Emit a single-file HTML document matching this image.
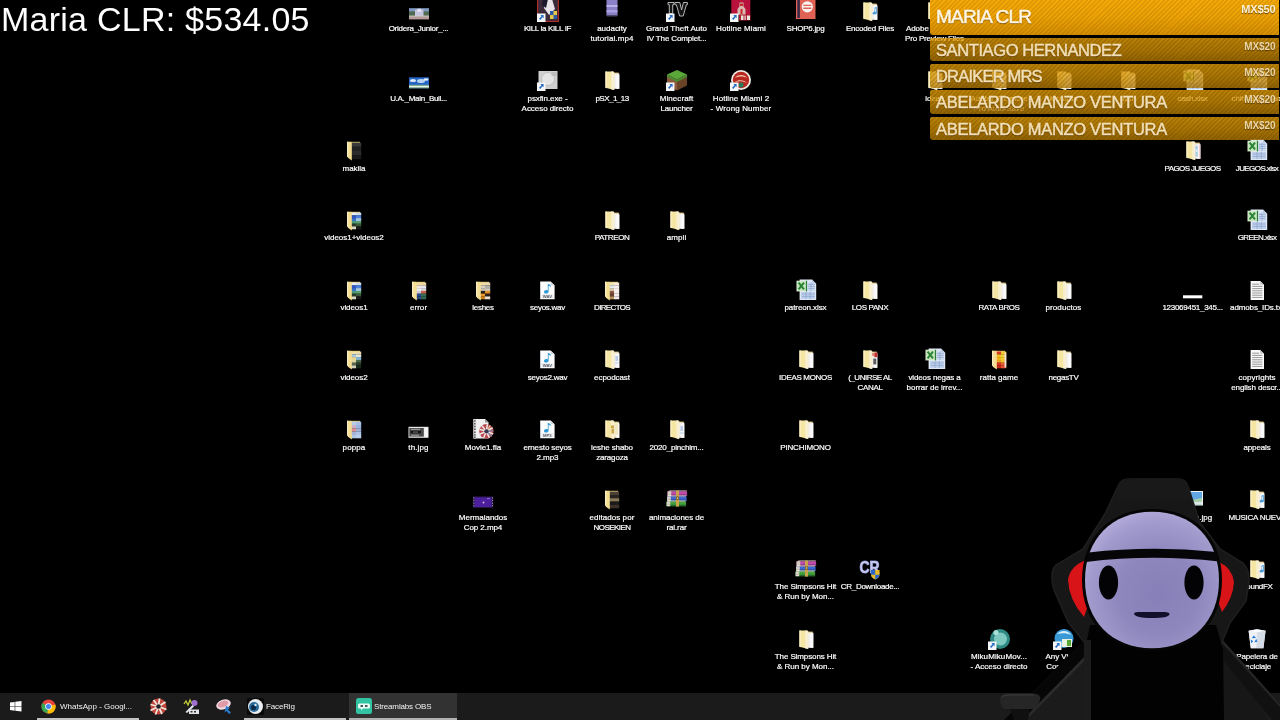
<!DOCTYPE html>
<html lang="es">
<head>
<meta charset="utf-8">
<title>Escritorio</title>
<style>
html,body{margin:0;padding:0;background:#000;}
body{width:1280px;height:720px;overflow:hidden;position:relative;font-family:"Liberation Sans",sans-serif;color:#fff;}
#total{will-change:transform;position:absolute;left:1px;top:-1px;font-size:34px;line-height:40px;white-space:nowrap;color:#fff;letter-spacing:.25px;}
#desk{position:absolute;left:0;top:0;width:1280px;height:720px;will-change:transform;}
.it{position:absolute;width:80px;height:48px;}
.it .ic{position:absolute;left:29px;top:0;width:22px;height:22px;overflow:visible;}
.it .lb{position:absolute;left:-10px;width:100px;top:23.600px;text-align:center;font-size:8px;line-height:10.100px;color:#fff;white-space:nowrap;-webkit-text-stroke:.2px #fff;}
.it .lb span{display:block;}
#bars{will-change:transform;position:absolute;left:930px;top:0;width:350px;height:142px;}
.bar{position:absolute;left:0;width:349px;border-radius:2px 0 0 3px;overflow:hidden;}
.bar .nm{position:absolute;left:6px;white-space:nowrap;text-shadow:0 1px 1px rgba(60,35,0,.7);}
.bar .am{position:absolute;right:3px;top:4px;font-size:10px;line-height:10px;font-weight:bold;letter-spacing:-.1px;text-shadow:0 1px 1px rgba(60,35,0,.7);}
.b1{top:-2px;height:37px;background:repeating-linear-gradient(135deg,rgba(120,60,0,.16) 0 1.400px,rgba(0,0,0,0) 1.400px 3.200px),linear-gradient(#f4aa08,#eba204 50%,#d28e02);}
.b1 .nm{top:7px;font-size:19px;line-height:24px;color:#fff6e2;letter-spacing:-.8px;-webkit-text-stroke:.5px #fff6e2;}
.b1 .am{color:#fff3d6;top:5.500px;font-size:11px;right:3.500px;}
.bx{height:23.600px;background:repeating-linear-gradient(135deg,rgba(90,45,0,.20) 0 1.400px,rgba(0,0,0,0) 1.400px 3.200px),linear-gradient(rgba(236,166,8,.78),rgba(212,148,5,.78) 55%,rgba(178,122,3,.8));}
.bx .nm{top:1px;font-size:16.500px;line-height:22px;color:#f3dfb6;letter-spacing:-.4px;-webkit-text-stroke:.5px #f3dfb6;}
.bx .am{color:#ecd6a6;top:4.300px;right:3.500px;}
#tb{position:absolute;left:0;top:693px;width:1280px;height:27px;background:#1b1b1b;will-change:transform;}
#tb .t{position:absolute;top:8.800px;font-size:8px;line-height:10px;color:#f2f2f2;white-space:nowrap;letter-spacing:-.15px;}
#tb .ul{position:absolute;top:25.400px;height:1.600px;background:#c2c2c2;}
#char{position:absolute;left:980px;top:460px;width:300px;height:260px;}
</style>
</head>
<body>

<div id="desk">
<div class="it" style="left:378.5px;top:0.5px"><svg class="ic" viewBox="0 0 22 22"><rect x="1" y="7.300" width="20" height="11" fill="#4f6a52"/><rect x="1" y="7.300" width="20" height="3" fill="#8098c4"/><rect x="7" y="8.500" width="8.500" height="6.500" fill="#c4c4de"/><rect x="9.500" y="7.800" width="3.500" height="3" fill="#e4e4f4"/><rect x="1" y="15.300" width="20" height="3" fill="#b89a9a"/><rect x="1" y="14.600" width="20" height="1" fill="#d8d0d0"/></svg><div class="lb"><span style="letter-spacing:-0.24px">Oridera_Junior_...</span></div></div>
<div class="it" style="left:507.5px;top:0.5px"><svg class="ic" viewBox="0 0 22 22"><rect x="0" y="-2" width="22" height="23" fill="#a83028"/><rect x="1.2" y="-2" width="19.6" height="21.800" fill="#3a2a3a"/><path d="M8 -2h7l3 10l-6 6l-5-7z" fill="#e8e4e8"/><path d="M6 -2h5l-2 9l-4-3z" fill="#1a1a2a"/><path d="M13 10h7v8h-7z" fill="#e8c848"/><path d="M13 10h3.5v4h-3.500zM16.500 14h3.500v4h-3.500z" fill="#2a5aa8"/><rect x="0" y="12.5" width="8.5" height="8.5" fill="#f4f6f8"/><path d="M3.4 14.1l3.2 0l0 3.2l-1-1l-2.4 2.6l-1.2-1.2l2.5-2.5z" fill="#2a6cc4"/></svg><div class="lb"><span style="letter-spacing:-0.34px">KILL la KILL IF</span></div></div>
<div class="it" style="left:572.0px;top:0.5px"><svg class="ic" viewBox="0 0 22 22"><rect x="5.5" y="-3" width="11" height="18" fill="#8a80c8"/><rect x="5.5" y="4" width="11" height="2" fill="#b8b0e8"/><rect x="5.5" y="9" width="11" height="2.500" fill="#a8a0e0"/><rect x="6" y="14" width="10" height="1.500" fill="#4a4668"/></svg><div class="lb"><span style="letter-spacing:-0.02px">audacity</span><span style="letter-spacing:0.10px">tutorial.mp4</span></div></div>
<div class="it" style="left:636.5px;top:0.5px"><svg class="ic" viewBox="0 0 22 22"><path d="M2 1.500h6v2.200h-1.300v8.800h-3.400v-8.800h-1.300z" fill="#151515" stroke="#b4b4b4" stroke-width="1"/><path d="M8.800 1.500h5l1.800 7.500l1.800-7.500h4v2.200h-1l-3.200 11.300h-3.600l-3.200-11.300h-1.600z" fill="#151515" stroke="#b4b4b4" stroke-width="1"/><rect x="0" y="12.5" width="8.5" height="8.5" fill="#f4f6f8"/><path d="M3.4 14.1l3.2 0l0 3.2l-1-1l-2.4 2.6l-1.2-1.2l2.5-2.5z" fill="#2a6cc4"/></svg><div class="lb"><span style="letter-spacing:0.02px">Grand Theft Auto</span><span style="letter-spacing:-0.14px">IV The Complet...</span></div></div>
<div class="it" style="left:701.0px;top:0.5px"><svg class="ic" viewBox="0 0 22 22"><rect x="1.300" y="-2" width="19" height="16" fill="#b8123c"/><path d="M9.500 1.500h4v4l2 2.500v6h-8v-6l2-2.500z" fill="#d8b8b0"/><path d="M10 2.500h3v2.500h-3zM10.500 8h2v5h-2z" fill="#c82828"/><path d="M9 13.500h11.500v6h-11.500z" fill="#a81c30"/><path d="M11 14.500h2.500v4.500h-2.500zM14.500 14.500h1.200v4.500h-1.200zM17 14.500h3v4.500h-3z" fill="#f0e6e0"/><rect x="0" y="12.5" width="8.5" height="8.5" fill="#f4f6f8"/><path d="M3.4 14.1l3.2 0l0 3.2l-1-1l-2.4 2.6l-1.2-1.2l2.5-2.5z" fill="#2a6cc4"/></svg><div class="lb"><span style="letter-spacing:0.11px">Hotline Miami</span></div></div>
<div class="it" style="left:765.5px;top:0.5px"><svg class="ic" viewBox="0 0 22 22"><rect x="1" y="-2" width="19.500" height="20" fill="#df6254"/><rect x="2.300" y="-2" width="2.600" height="19" fill="#3a2a48"/><circle cx="12.300" cy="5.800" r="5.600" fill="#fbf3f1"/><path d="M8.300 3.800h8v1.300h-8zM8.300 6.600h8v1.300h-8z" fill="#df6254"/></svg><div class="lb"><span style="letter-spacing:-0.24px">SHOP6.jpg</span></div></div>
<div class="it" style="left:830.0px;top:0.5px"><svg class="ic" viewBox="0 0 22 22"><path d="M12.5 2.6h5.2v1.600h-5.200z" fill="#e3c878"/><path d="M13 3.600h5.300v15.200h-5.300z" fill="#f1efef"/><path d="M15.200 4.600h3.100v14.200h-3.100z" fill="#fbfafa"/><path d="M4.400 1.600h8l.8 1.200v17.300l-8.800-2.300z" fill="#f6e6a4"/><path d="M4.400 1.600h1.600v16.600l-1.600-.4z" fill="#f9edbd"/><path d="M10.200 1.600h2.200l.8 1.200v17.300l-3-.8z" fill="#f7efcf"/><path d="M15.600 6.500l2.200-.6v6.200a1.300 1.200 0 1 1-.8-1.100v-3.600l-.8.200v4.600a1.300 1.200 0 1 1-.8-1.100z" fill="#4a9ad8"/></svg><div class="lb"><span style="letter-spacing:-0.20px">Encoded Files</span></div></div>
<div class="it" style="left:894.5px;top:0.5px"><svg class="ic" viewBox="0 0 22 22"><path d="M12.5 2.6h5.2v1.600h-5.200z" fill="#e3c878"/><path d="M13 3.600h5.300v15.200h-5.300z" fill="#f1efef"/><path d="M15.200 4.600h3.100v14.200h-3.100z" fill="#fbfafa"/><path d="M4.400 1.600h8l.8 1.200v17.300l-8.800-2.300z" fill="#f6e6a4"/><path d="M4.400 1.600h1.600v16.600l-1.600-.4z" fill="#f9edbd"/><path d="M10.200 1.600h2.200l.8 1.200v17.300l-3-.8z" fill="#f7efcf"/></svg><div class="lb"><span style="letter-spacing:-0.05px">Adobe Premiere</span><span style="letter-spacing:-0.20px">Pro Preview Files</span></div></div>
<div class="it" style="left:378.5px;top:70.3px"><svg class="ic" viewBox="0 0 22 22"><rect x="1" y="7.300" width="20" height="11" fill="#2565c6"/><ellipse cx="5" cy="10.500" rx="3" ry="1.600" fill="#d8e8f8"/><ellipse cx="13" cy="11" rx="4" ry="2" fill="#b8d4f0"/><ellipse cx="18" cy="9.500" rx="2.500" ry="1.300" fill="#e0ecf8"/><rect x="1" y="14.800" width="20" height="3.500" fill="#7fae92"/><rect x="1" y="16" width="20" height="1.200" fill="#e8f0e8"/></svg><div class="lb"><span style="letter-spacing:-0.30px">U.A._Main_Buil...</span></div></div>
<div class="it" style="left:507.5px;top:70.3px"><svg class="ic" viewBox="0 0 22 22"><rect x="1.500" y="1" width="19" height="18" fill="#d0d0d0"/><circle cx="11" cy="9" r="6.500" fill="#e4e4e4" stroke="#b8b8b8" stroke-width=".8"/><rect x="14.500" y="2" width="5" height="4" fill="#bcbcbc"/><rect x="0" y="12.5" width="8.5" height="8.5" fill="#f4f6f8"/><path d="M3.4 14.1l3.2 0l0 3.2l-1-1l-2.4 2.6l-1.2-1.2l2.5-2.5z" fill="#2a6cc4"/></svg><div class="lb"><span style="letter-spacing:-0.08px">psxfin.exe -</span><span style="letter-spacing:-0.05px">Acceso directo</span></div></div>
<div class="it" style="left:572.0px;top:70.3px"><svg class="ic" viewBox="0 0 22 22"><path d="M12.5 2.6h5.2v1.600h-5.200z" fill="#e3c878"/><path d="M13 3.600h5.300v15.200h-5.300z" fill="#f1efef"/><path d="M15.200 4.600h3.100v14.200h-3.100z" fill="#fbfafa"/><path d="M4.400 1.600h8l.8 1.200v17.300l-8.800-2.300z" fill="#f6e6a4"/><path d="M4.400 1.600h1.600v16.600l-1.600-.4z" fill="#f9edbd"/><path d="M10.200 1.600h2.200l.8 1.200v17.300l-3-.8z" fill="#f7efcf"/></svg><div class="lb"><span style="letter-spacing:-0.52px">pSX_1_13</span></div></div>
<div class="it" style="left:636.5px;top:70.3px"><svg class="ic" viewBox="0 0 22 22"><path d="M11 0l10 4.500l-10 5l-10-5z" fill="#5aa83a"/><path d="M1 4.500l10 5v11l-10-5z" fill="#8a5a3a"/><path d="M21 4.500l-10 5v11l10-5z" fill="#6a4228"/><path d="M1 4.500l10 5v2.500l-10-5zM21 4.500l-10 5v2.500l10-5z" fill="#4a8a30"/><rect x="0" y="12.5" width="8.5" height="8.5" fill="#f4f6f8"/><path d="M3.4 14.1l3.2 0l0 3.2l-1-1l-2.4 2.6l-1.2-1.2l2.5-2.5z" fill="#2a6cc4"/></svg><div class="lb"><span style="letter-spacing:0.08px">Minecraft</span><span style="letter-spacing:-0.16px">Launcher</span></div></div>
<div class="it" style="left:701.0px;top:70.3px"><svg class="ic" viewBox="0 0 22 22"><circle cx="11" cy="10" r="10" fill="#f0e8e4"/><circle cx="11" cy="10" r="8.200" fill="#b82820"/><path d="M5 8c2-4 10-4 12 0c-3-2-9-2-12 0zM5 12c3-3 10-2 12 1c-4-2-8-2-12-1z" fill="#f0c8b0"/><circle cx="11" cy="15" r="2.500" fill="#2a7a5a"/><rect x="0" y="12.5" width="8.5" height="8.5" fill="#f4f6f8"/><path d="M3.4 14.1l3.2 0l0 3.2l-1-1l-2.4 2.6l-1.2-1.2l2.5-2.5z" fill="#2a6cc4"/></svg><div class="lb"><span style="letter-spacing:0.08px">Hotline Miami 2</span><span style="letter-spacing:0.13px">- Wrong Number</span></div></div>
<div class="it" style="left:894.5px;top:70.3px"><svg class="ic" viewBox="0 0 22 22"><path d="M12.5 2.6h5.2v1.600h-5.200z" fill="#e3c878"/><path d="M13 3.600h5.300v15.200h-5.300z" fill="#f1efef"/><path d="M15.200 4.600h3.100v14.200h-3.100z" fill="#fbfafa"/><path d="M4.400 1.600h8l.8 1.200v17.300l-8.800-2.300z" fill="#f6e6a4"/><path d="M4.400 1.600h1.600v16.600l-1.600-.4z" fill="#f9edbd"/><path d="M10.200 1.600h2.200l.8 1.200v17.300l-3-.8z" fill="#f7efcf"/></svg><div class="lb"><span style="letter-spacing:-0.17px">ideas</span></div></div>
<div class="it" style="left:959.0px;top:70.3px"><svg class="ic" viewBox="0 0 22 22"><path d="M12.5 2.6h5.2v1.600h-5.200z" fill="#e3c878"/><path d="M13 3.600h5.300v15.200h-5.300z" fill="#f1efef"/><path d="M15.200 4.600h3.100v14.200h-3.100z" fill="#fbfafa"/><path d="M4.400 1.600h8l.8 1.200v17.300l-8.800-2.300z" fill="#f6e6a4"/><path d="M4.400 1.600h1.600v16.600l-1.600-.4z" fill="#f9edbd"/><path d="M10.200 1.600h2.200l.8 1.200v17.300l-3-.8z" fill="#f7efcf"/></svg><div class="lb"><span style="letter-spacing:-0.05px">Adobe Premiere</span><span style="letter-spacing:-0.06px">Pro Auto-Save</span></div></div>
<div class="it" style="left:1023.5px;top:70.3px"><svg class="ic" viewBox="0 0 22 22"><path d="M12.5 2.6h5.2v1.600h-5.200z" fill="#e3c878"/><path d="M13 3.600h5.300v15.200h-5.300z" fill="#f1efef"/><path d="M15.200 4.600h3.100v14.200h-3.100z" fill="#fbfafa"/><path d="M4.400 1.600h8l.8 1.200v17.300l-8.800-2.300z" fill="#f6e6a4"/><path d="M4.400 1.600h1.600v16.600l-1.600-.4z" fill="#f9edbd"/><path d="M10.200 1.600h2.200l.8 1.200v17.300l-3-.8z" fill="#f7efcf"/></svg><div class="lb"><span style="letter-spacing:-0.09px">facturas</span></div></div>
<div class="it" style="left:1088.0px;top:70.3px"><svg class="ic" viewBox="0 0 22 22"><path d="M12.5 2.6h5.2v1.600h-5.200z" fill="#e3c878"/><path d="M13 3.600h5.300v15.200h-5.300z" fill="#f1efef"/><path d="M15.200 4.600h3.100v14.200h-3.100z" fill="#fbfafa"/><path d="M4.400 1.600h8l.8 1.200v17.300l-8.800-2.300z" fill="#f6e6a4"/><path d="M4.400 1.600h1.600v16.600l-1.600-.4z" fill="#f9edbd"/><path d="M10.200 1.600h2.200l.8 1.200v17.300l-3-.8z" fill="#f7efcf"/></svg><div class="lb"><span style="letter-spacing:0.07px">ratta</span></div></div>
<div class="it" style="left:1152.5px;top:70.3px"><svg class="ic" viewBox="0 0 22 22"><path d="M4.600 -.4h12.400l4.200 4.200v16.200h-16.600z" fill="#dde7f6"/><path d="M17 -.4l4.200 4.200h-4.200z" fill="#b4c5e0"/><path d="M6 12h14v7h-14z" fill="#c0d0ea"/><path d="M12.800 2.600h7v8.600h-7z" fill="#ccdaef"/><path d="M12.800 4.400h7M12.800 6.400h7M12.800 8.400h7M16 2.600v8.600M7 14h12.500M7 16.400h12.500M11 12v7M15.300 12v7" stroke="#8aa3cf" stroke-width=".7" fill="none"/><rect x="1.500" y=".7" width="10.600" height="10.700" fill="#dff0d8"/><rect x="2.100" y="1.300" width="9" height="9.500" fill="#c6e4bb"/><rect x="10.900" y=".7" width="1.200" height="10.700" fill="#2e7d3a"/><path d="M3.600 2.600l5.400 6.800M9 2.600l-5.400 6.800" stroke="#2a8436" stroke-width="2" fill="none"/></svg><div class="lb"><span style="letter-spacing:-0.31px">cash.xlsx</span></div></div>
<div class="it" style="left:1217.0px;top:70.3px"><svg class="ic" viewBox="0 0 22 22"><path d="M4.600 -.4h12.400l4.200 4.200v16.200h-16.600z" fill="#dde7f6"/><path d="M17 -.4l4.200 4.200h-4.200z" fill="#b4c5e0"/><path d="M6 12h14v7h-14z" fill="#c0d0ea"/><path d="M12.800 2.600h7v8.600h-7z" fill="#ccdaef"/><path d="M12.800 4.400h7M12.800 6.400h7M12.800 8.400h7M16 2.600v8.600M7 14h12.500M7 16.400h12.500M11 12v7M15.300 12v7" stroke="#8aa3cf" stroke-width=".7" fill="none"/><rect x="1.500" y=".7" width="10.600" height="10.700" fill="#dff0d8"/><rect x="2.100" y="1.300" width="9" height="9.500" fill="#c6e4bb"/><rect x="10.900" y=".7" width="1.200" height="10.700" fill="#2e7d3a"/><path d="M3.600 2.600l5.400 6.800M9 2.600l-5.400 6.800" stroke="#2a8436" stroke-width="2" fill="none"/></svg><div class="lb"><span style="letter-spacing:-0.15px">chihuahua.xlsx</span></div></div>
<div class="it" style="left:314.0px;top:140.1px"><svg class="ic" viewBox="0 0 22 22"><path d="M7.500 1.800h9.500v1.500h-9.500z" fill="#e3c878"/><rect x="8" y="2.60" width="5.2" height="4.25" fill="#3a3a3a"/><rect x="13" y="2.60" width="5.2" height="4.25" fill="#3a3a3a"/><rect x="8" y="6.75" width="5.2" height="4.25" fill="#222"/><rect x="13" y="6.75" width="5.2" height="4.25" fill="#222"/><rect x="8" y="10.90" width="5.2" height="4.25" fill="#2c2c2c"/><rect x="13" y="10.90" width="5.2" height="4.25" fill="#2c2c2c"/><rect x="8" y="15.05" width="5.2" height="4.25" fill="#1a1a1a"/><rect x="13" y="15.05" width="5.2" height="4.25" fill="#1a1a1a"/><path d="M4 1.800h4l.8 1v17.700l-4-2.700z" fill="#f3dd92"/><path d="M4 1.800h1.400v15.400l-1.400-.8z" fill="#f9edbd"/></svg><div class="lb"><span style="letter-spacing:-0.04px">makila</span></div></div>
<div class="it" style="left:1152.5px;top:140.1px"><svg class="ic" viewBox="0 0 22 22"><path d="M12.5 2.6h5.2v1.600h-5.200z" fill="#e3c878"/><path d="M13 3.600h5.300v15.200h-5.300z" fill="#ebe6f0"/><path d="M15.200 4.600h3.100v14.200h-3.100z" fill="#fbfafa"/><path d="M4.400 1.600h8l.8 1.200v17.300l-8.800-2.300z" fill="#f6e6a4"/><path d="M4.400 1.600h1.600v16.600l-1.600-.4z" fill="#f9edbd"/><path d="M10.200 1.600h2.200l.8 1.200v17.300l-3-.8z" fill="#f7efcf"/><path d="M13.400 6h2.400v10.500h-2.400z" fill="#a9cde2"/><path d="M13.400 9h2.400v3h-2.400z" fill="#d8e8f0"/><path d="M16.800 4.600h1.500v14.200h-1.500z" fill="#f2d4d4"/></svg><div class="lb"><span style="letter-spacing:-0.60px">PAGOS JUEGOS</span></div></div>
<div class="it" style="left:1217.0px;top:140.1px"><svg class="ic" viewBox="0 0 22 22"><path d="M4.600 -.4h12.400l4.200 4.200v16.200h-16.600z" fill="#dde7f6"/><path d="M17 -.4l4.200 4.200h-4.200z" fill="#b4c5e0"/><path d="M6 12h14v7h-14z" fill="#c0d0ea"/><path d="M12.800 2.600h7v8.600h-7z" fill="#ccdaef"/><path d="M12.800 4.400h7M12.800 6.400h7M12.800 8.400h7M16 2.600v8.600M7 14h12.500M7 16.400h12.500M11 12v7M15.300 12v7" stroke="#8aa3cf" stroke-width=".7" fill="none"/><rect x="1.500" y=".7" width="10.600" height="10.700" fill="#dff0d8"/><rect x="2.100" y="1.300" width="9" height="9.500" fill="#c6e4bb"/><rect x="10.900" y=".7" width="1.200" height="10.700" fill="#2e7d3a"/><path d="M3.600 2.600l5.400 6.800M9 2.600l-5.400 6.800" stroke="#2a8436" stroke-width="2" fill="none"/></svg><div class="lb"><span style="letter-spacing:-0.58px">JUEGOS.xlsx</span></div></div>
<div class="it" style="left:314.0px;top:209.8px"><svg class="ic" viewBox="0 0 22 22"><path d="M7.500 1.800h9.500v1.500h-9.500z" fill="#e3c878"/><rect x="8" y="2.60" width="5.2" height="2.87" fill="#e8ecf4"/><rect x="13" y="2.60" width="5.2" height="2.87" fill="#d0dcf0"/><rect x="8" y="5.37" width="5.2" height="2.87" fill="#3058c0"/><rect x="13" y="5.37" width="5.2" height="2.87" fill="#4a80dc"/><rect x="8" y="8.13" width="5.2" height="2.87" fill="#3a70d0"/><rect x="13" y="8.13" width="5.2" height="2.87" fill="#a8c8e8"/><rect x="8" y="10.90" width="5.2" height="2.87" fill="#4a9a78"/><rect x="13" y="10.90" width="5.2" height="2.87" fill="#58a070"/><rect x="8" y="13.67" width="5.2" height="2.87" fill="#2a3a2a"/><rect x="13" y="13.67" width="5.2" height="2.87" fill="#3a5a3a"/><rect x="8" y="16.43" width="5.2" height="2.87" fill="#d8d8c0"/><rect x="13" y="16.43" width="5.2" height="2.87" fill="#1a1a1a"/><path d="M4 1.800h4l.8 1v17.700l-4-2.700z" fill="#f3dd92"/><path d="M4 1.800h1.400v15.400l-1.400-.8z" fill="#f9edbd"/></svg><div class="lb"><span style="letter-spacing:-0.02px">videos1+videos2</span></div></div>
<div class="it" style="left:572.0px;top:209.8px"><svg class="ic" viewBox="0 0 22 22"><path d="M12.5 2.6h5.2v1.600h-5.200z" fill="#e3c878"/><path d="M13 3.600h5.300v15.200h-5.300z" fill="#f1efef"/><path d="M15.200 4.600h3.100v14.200h-3.100z" fill="#fbfafa"/><path d="M4.400 1.600h8l.8 1.200v17.300l-8.800-2.300z" fill="#f6e6a4"/><path d="M4.400 1.600h1.600v16.600l-1.600-.4z" fill="#f9edbd"/><path d="M10.200 1.600h2.200l.8 1.200v17.300l-3-.8z" fill="#f7efcf"/></svg><div class="lb"><span style="letter-spacing:-0.40px">PATREON</span></div></div>
<div class="it" style="left:636.5px;top:209.8px"><svg class="ic" viewBox="0 0 22 22"><path d="M12.5 2.6h5.2v1.600h-5.200z" fill="#e3c878"/><path d="M13 3.600h5.300v15.200h-5.300z" fill="#f1efef"/><path d="M15.200 4.600h3.100v14.200h-3.100z" fill="#fbfafa"/><path d="M4.400 1.600h8l.8 1.200v17.300l-8.800-2.300z" fill="#f6e6a4"/><path d="M4.400 1.600h1.600v16.600l-1.600-.4z" fill="#f9edbd"/><path d="M10.200 1.600h2.200l.8 1.200v17.300l-3-.8z" fill="#f7efcf"/></svg><div class="lb"><span style="letter-spacing:0.08px">ampli</span></div></div>
<div class="it" style="left:1217.0px;top:209.8px"><svg class="ic" viewBox="0 0 22 22"><path d="M4.600 -.4h12.400l4.200 4.200v16.200h-16.600z" fill="#dde7f6"/><path d="M17 -.4l4.200 4.200h-4.200z" fill="#b4c5e0"/><path d="M6 12h14v7h-14z" fill="#c0d0ea"/><path d="M12.800 2.600h7v8.600h-7z" fill="#ccdaef"/><path d="M12.800 4.400h7M12.800 6.400h7M12.800 8.400h7M16 2.600v8.600M7 14h12.500M7 16.400h12.500M11 12v7M15.300 12v7" stroke="#8aa3cf" stroke-width=".7" fill="none"/><rect x="1.500" y=".7" width="10.600" height="10.700" fill="#dff0d8"/><rect x="2.100" y="1.300" width="9" height="9.500" fill="#c6e4bb"/><rect x="10.900" y=".7" width="1.200" height="10.700" fill="#2e7d3a"/><path d="M3.600 2.600l5.400 6.800M9 2.600l-5.400 6.800" stroke="#2a8436" stroke-width="2" fill="none"/></svg><div class="lb"><span style="letter-spacing:-0.57px">GREEN.xlsx</span></div></div>
<div class="it" style="left:314.0px;top:279.6px"><svg class="ic" viewBox="0 0 22 22"><path d="M7.500 1.800h9.500v1.500h-9.500z" fill="#e3c878"/><rect x="8" y="2.60" width="5.2" height="2.87" fill="#e8ecf4"/><rect x="13" y="2.60" width="5.2" height="2.87" fill="#d0dcf0"/><rect x="8" y="5.37" width="5.2" height="2.87" fill="#3058c0"/><rect x="13" y="5.37" width="5.2" height="2.87" fill="#4a80dc"/><rect x="8" y="8.13" width="5.2" height="2.87" fill="#3a70d0"/><rect x="13" y="8.13" width="5.2" height="2.87" fill="#a8c8e8"/><rect x="8" y="10.90" width="5.2" height="2.87" fill="#4a9a78"/><rect x="13" y="10.90" width="5.2" height="2.87" fill="#58a070"/><rect x="8" y="13.67" width="5.2" height="2.87" fill="#2a3a2a"/><rect x="13" y="13.67" width="5.2" height="2.87" fill="#3a5a3a"/><rect x="8" y="16.43" width="5.2" height="2.87" fill="#d8d8c0"/><rect x="13" y="16.43" width="5.2" height="2.87" fill="#1a1a1a"/><path d="M4 1.800h4l.8 1v17.700l-4-2.700z" fill="#f3dd92"/><path d="M4 1.800h1.400v15.400l-1.400-.8z" fill="#f9edbd"/></svg><div class="lb"><span style="letter-spacing:-0.07px">videos1</span></div></div>
<div class="it" style="left:378.5px;top:279.6px"><svg class="ic" viewBox="0 0 22 22"><path d="M7.500 1.800h9.500v1.500h-9.500z" fill="#e3c878"/><rect x="8" y="2.60" width="5.2" height="2.87" fill="#f2dca4"/><rect x="13" y="2.60" width="5.2" height="2.87" fill="#efd49a"/><rect x="8" y="5.37" width="5.2" height="2.87" fill="#f0e8e0"/><rect x="13" y="5.37" width="5.2" height="2.87" fill="#e8e4ec"/><rect x="8" y="8.13" width="5.2" height="2.87" fill="#eceaf0"/><rect x="13" y="8.13" width="5.2" height="2.87" fill="#d8d4dc"/><rect x="8" y="10.90" width="5.2" height="2.87" fill="#c8c8d8"/><rect x="13" y="10.90" width="5.2" height="2.87" fill="#c06048"/><rect x="8" y="13.67" width="5.2" height="2.87" fill="#2a4a8a"/><rect x="13" y="13.67" width="5.2" height="2.87" fill="#3a6a5a"/><rect x="8" y="16.43" width="5.2" height="2.87" fill="#284880"/><rect x="13" y="16.43" width="5.2" height="2.87" fill="#306850"/><path d="M4 1.800h4l.8 1v17.700l-4-2.700z" fill="#f3dd92"/><path d="M4 1.800h1.400v15.400l-1.400-.8z" fill="#f9edbd"/></svg><div class="lb"><span style="letter-spacing:0.07px">error</span></div></div>
<div class="it" style="left:443.0px;top:279.6px"><svg class="ic" viewBox="0 0 22 22"><path d="M7.500 1.800h9.500v1.500h-9.500z" fill="#e3c878"/><rect x="8" y="2.60" width="5.2" height="2.87" fill="#f2dca4"/><rect x="13" y="2.60" width="5.2" height="2.87" fill="#e8d8b0"/><rect x="8" y="5.37" width="5.2" height="2.87" fill="#d8d0c0"/><rect x="13" y="5.37" width="5.2" height="2.87" fill="#b0b0a8"/><rect x="8" y="8.13" width="5.2" height="2.87" fill="#c8c0b0"/><rect x="13" y="8.13" width="5.2" height="2.87" fill="#d0c8b8"/><rect x="8" y="10.90" width="5.2" height="2.87" fill="#2a2018"/><rect x="13" y="10.90" width="5.2" height="2.87" fill="#e09028"/><rect x="8" y="13.67" width="5.2" height="2.87" fill="#e89828"/><rect x="13" y="13.67" width="5.2" height="2.87" fill="#2a2018"/><rect x="8" y="16.43" width="5.2" height="2.87" fill="#c88020"/><rect x="13" y="16.43" width="5.2" height="2.87" fill="#e8e0d0"/><path d="M4 1.800h4l.8 1v17.700l-4-2.700z" fill="#f3dd92"/><path d="M4 1.800h1.400v15.400l-1.400-.8z" fill="#f9edbd"/></svg><div class="lb"><span style="letter-spacing:-0.25px">leshes</span></div></div>
<div class="it" style="left:507.5px;top:279.6px"><svg class="ic" viewBox="0 0 22 22"><path d="M3.200 1.600h10.400l4 3.600v14h-14.400z" fill="#fbfcfd"/><path d="M13.600 1.600l4 3.600h-4z" fill="#ccd4de"/><path d="M10.800 3.800c1.600.4 3 1.400 3.200 3.400c-.8-.9-1.600-1.300-2.400-1.400v5.600c0 1.300-1.100 2.200-2.500 2.200c-1.300 0-2.100-.7-2.100-1.600c0-1.100 1-1.900 2.300-1.900c.5 0 1 .1 1.500 .4z" fill="#2f9ad6"/><rect x="4.600" y="14.300" width="11.600" height="3.800" fill="#e9ebee"/><text x="10.400" y="17.700" font-family="Liberation Sans,sans-serif" font-size="4.200" font-weight="bold" fill="#5a5f66" text-anchor="middle">WAV</text></svg><div class="lb"><span style="letter-spacing:-0.27px">seyos.wav</span></div></div>
<div class="it" style="left:572.0px;top:279.6px"><svg class="ic" viewBox="0 0 22 22"><path d="M7.500 1.800h9.500v1.500h-9.500z" fill="#e3c878"/><rect x="8" y="2.60" width="5.2" height="2.87" fill="#f2e6b8"/><rect x="13" y="2.60" width="5.2" height="2.87" fill="#f4ecd8"/><rect x="8" y="5.37" width="5.2" height="2.87" fill="#dfeaf0"/><rect x="13" y="5.37" width="5.2" height="2.87" fill="#f6eeee"/><rect x="8" y="8.13" width="5.2" height="2.87" fill="#d8c8b0"/><rect x="13" y="8.13" width="5.2" height="2.87" fill="#f6eeee"/><rect x="8" y="10.90" width="5.2" height="2.87" fill="#8a5a40"/><rect x="13" y="10.90" width="5.2" height="2.87" fill="#f4eaea"/><rect x="8" y="13.67" width="5.2" height="2.87" fill="#6a4030"/><rect x="13" y="13.67" width="5.2" height="2.87" fill="#f4eaea"/><rect x="8" y="16.43" width="5.2" height="2.87" fill="#b89058"/><rect x="13" y="16.43" width="5.2" height="2.87" fill="#f2e8e8"/><path d="M4 1.800h4l.8 1v17.700l-4-2.700z" fill="#f3dd92"/><path d="M4 1.800h1.400v15.400l-1.400-.8z" fill="#f9edbd"/></svg><div class="lb"><span style="letter-spacing:-0.65px">DIRECTOS</span></div></div>
<div class="it" style="left:765.5px;top:279.6px"><svg class="ic" viewBox="0 0 22 22"><path d="M4.600 -.4h12.400l4.200 4.200v16.200h-16.600z" fill="#dde7f6"/><path d="M17 -.4l4.200 4.200h-4.200z" fill="#b4c5e0"/><path d="M6 12h14v7h-14z" fill="#c0d0ea"/><path d="M12.800 2.600h7v8.600h-7z" fill="#ccdaef"/><path d="M12.800 4.400h7M12.800 6.400h7M12.800 8.400h7M16 2.600v8.600M7 14h12.500M7 16.400h12.500M11 12v7M15.300 12v7" stroke="#8aa3cf" stroke-width=".7" fill="none"/><rect x="1.500" y=".7" width="10.600" height="10.700" fill="#dff0d8"/><rect x="2.100" y="1.300" width="9" height="9.500" fill="#c6e4bb"/><rect x="10.900" y=".7" width="1.200" height="10.700" fill="#2e7d3a"/><path d="M3.600 2.600l5.400 6.800M9 2.600l-5.400 6.800" stroke="#2a8436" stroke-width="2" fill="none"/></svg><div class="lb"><span style="letter-spacing:-0.09px">patreon.xlsx</span></div></div>
<div class="it" style="left:830.0px;top:279.6px"><svg class="ic" viewBox="0 0 22 22"><path d="M12.5 2.6h5.2v1.600h-5.200z" fill="#e3c878"/><path d="M13 3.600h5.300v15.200h-5.300z" fill="#f1efef"/><path d="M15.200 4.600h3.100v14.200h-3.100z" fill="#fbfafa"/><path d="M4.400 1.600h8l.8 1.200v17.300l-8.800-2.300z" fill="#f6e6a4"/><path d="M4.400 1.600h1.600v16.600l-1.600-.4z" fill="#f9edbd"/><path d="M10.200 1.600h2.200l.8 1.200v17.300l-3-.8z" fill="#f7efcf"/></svg><div class="lb"><span style="letter-spacing:-0.36px">LOS PANX</span></div></div>
<div class="it" style="left:959.0px;top:279.6px"><svg class="ic" viewBox="0 0 22 22"><path d="M12.5 2.6h5.2v1.600h-5.200z" fill="#e3c878"/><path d="M13 3.600h5.300v15.200h-5.300z" fill="#f1efef"/><path d="M15.200 4.600h3.100v14.200h-3.100z" fill="#fbfafa"/><path d="M4.400 1.600h8l.8 1.200v17.300l-8.800-2.300z" fill="#f6e6a4"/><path d="M4.400 1.600h1.600v16.600l-1.600-.4z" fill="#f9edbd"/><path d="M10.200 1.600h2.200l.8 1.200v17.300l-3-.8z" fill="#f7efcf"/></svg><div class="lb"><span style="letter-spacing:-0.39px">RATA BROS</span></div></div>
<div class="it" style="left:1023.5px;top:279.6px"><svg class="ic" viewBox="0 0 22 22"><path d="M12.5 2.6h5.2v1.600h-5.200z" fill="#e3c878"/><path d="M13 3.600h5.300v15.200h-5.300z" fill="#f1efef"/><path d="M15.200 4.600h3.100v14.200h-3.100z" fill="#fbfafa"/><path d="M4.400 1.600h8l.8 1.200v17.300l-8.800-2.300z" fill="#f6e6a4"/><path d="M4.400 1.600h1.600v16.600l-1.600-.4z" fill="#f9edbd"/><path d="M10.200 1.600h2.200l.8 1.200v17.300l-3-.8z" fill="#f7efcf"/></svg><div class="lb"><span style="letter-spacing:0.08px">productos</span></div></div>
<div class="it" style="left:1152.5px;top:279.6px"><svg class="ic" viewBox="0 0 22 22"><rect x="1" y="15.300" width="19.300" height="3" fill="#fff"/></svg><div class="lb"><span style="letter-spacing:-0.27px">123069451_345...</span></div></div>
<div class="it" style="left:1217.0px;top:279.6px"><svg class="ic" viewBox="0 0 22 22"><path d="M4.600 1h9.600l3.800 3.800v15.200h-13.400z" fill="#fafafa"/><path d="M14.200 1l3.800 3.800h-3.800z" fill="#c4c4c4"/><path d="M6.200 4.200h7M6.200 6.400h10.200M6.200 8.600h10.200M6.200 10.800h10.200M6.200 13h10.200M6.200 15.200h10.200M6.200 17.400h10.200" stroke="#8c8c8c" stroke-width=".9" fill="none"/></svg><div class="lb"><span style="letter-spacing:-0.13px">admobs_IDs.txt</span></div></div>
<div class="it" style="left:314.0px;top:349.4px"><svg class="ic" viewBox="0 0 22 22"><path d="M7.500 1.800h9.500v1.500h-9.500z" fill="#e3c878"/><rect x="8" y="2.60" width="5.2" height="2.87" fill="#f0e0a8"/><rect x="13" y="2.60" width="5.2" height="2.87" fill="#e8dca8"/><rect x="8" y="5.37" width="5.2" height="2.87" fill="#a8c8e0"/><rect x="13" y="5.37" width="5.2" height="2.87" fill="#e8e8d8"/><rect x="8" y="8.13" width="5.2" height="2.87" fill="#e8d890"/><rect x="13" y="8.13" width="5.2" height="2.87" fill="#88b8d8"/><rect x="8" y="10.90" width="5.2" height="2.87" fill="#e0d8a0"/><rect x="13" y="10.90" width="5.2" height="2.87" fill="#486848"/><rect x="8" y="13.67" width="5.2" height="2.87" fill="#586850"/><rect x="13" y="13.67" width="5.2" height="2.87" fill="#283828"/><rect x="8" y="16.43" width="5.2" height="2.87" fill="#d0d0b8"/><rect x="13" y="16.43" width="5.2" height="2.87" fill="#1a2a1a"/><path d="M4 1.800h4l.8 1v17.700l-4-2.700z" fill="#f3dd92"/><path d="M4 1.800h1.400v15.400l-1.400-.8z" fill="#f9edbd"/></svg><div class="lb"><span style="letter-spacing:-0.07px">videos2</span></div></div>
<div class="it" style="left:507.5px;top:349.4px"><svg class="ic" viewBox="0 0 22 22"><path d="M3.200 1.600h10.400l4 3.600v14h-14.400z" fill="#fbfcfd"/><path d="M13.600 1.600l4 3.600h-4z" fill="#ccd4de"/><path d="M10.800 3.800c1.600.4 3 1.400 3.200 3.400c-.8-.9-1.600-1.300-2.400-1.400v5.600c0 1.300-1.100 2.200-2.500 2.200c-1.300 0-2.100-.7-2.100-1.600c0-1.100 1-1.900 2.300-1.900c.5 0 1 .1 1.500 .4z" fill="#2f9ad6"/><rect x="4.600" y="14.300" width="11.600" height="3.800" fill="#e9ebee"/><text x="10.400" y="17.700" font-family="Liberation Sans,sans-serif" font-size="4.200" font-weight="bold" fill="#5a5f66" text-anchor="middle">WAV</text></svg><div class="lb"><span style="letter-spacing:-0.25px">seyos2.wav</span></div></div>
<div class="it" style="left:572.0px;top:349.4px"><svg class="ic" viewBox="0 0 22 22"><path d="M12.5 2.6h5.2v1.600h-5.200z" fill="#e3c878"/><path d="M13 3.600h5.300v15.200h-5.300z" fill="#f1efef"/><path d="M15.200 4.600h3.100v14.200h-3.100z" fill="#fbfafa"/><path d="M4.400 1.600h8l.8 1.200v17.300l-8.800-2.300z" fill="#f6e6a4"/><path d="M4.400 1.600h1.600v16.600l-1.600-.4z" fill="#f9edbd"/><path d="M10.200 1.600h2.200l.8 1.200v17.300l-3-.8z" fill="#f7efcf"/><path d="M14.500 7h2.500v5h-2.500z" fill="#b9cdea"/><path d="M14 13h3.500v2h-3.500z" fill="#d6e0f0"/></svg><div class="lb"><span style="letter-spacing:-0.07px">ecpodcast</span></div></div>
<div class="it" style="left:765.5px;top:349.4px"><svg class="ic" viewBox="0 0 22 22"><path d="M12.5 2.6h5.2v1.600h-5.200z" fill="#e3c878"/><path d="M13 3.600h5.300v15.200h-5.300z" fill="#f1efef"/><path d="M15.200 4.600h3.100v14.200h-3.100z" fill="#fbfafa"/><path d="M4.400 1.600h8l.8 1.200v17.300l-8.800-2.300z" fill="#f6e6a4"/><path d="M4.400 1.600h1.600v16.600l-1.600-.4z" fill="#f9edbd"/><path d="M10.200 1.600h2.200l.8 1.200v17.300l-3-.8z" fill="#f7efcf"/></svg><div class="lb"><span style="letter-spacing:-0.33px">IDEAS MONOS</span></div></div>
<div class="it" style="left:830.0px;top:349.4px"><svg class="ic" viewBox="0 0 22 22"><path d="M12.5 2.6h5.2v1.600h-5.200z" fill="#e3c878"/><path d="M13 3.600h5.300v15.200h-5.300z" fill="#f1efef"/><path d="M15.200 4.600h3.100v14.200h-3.100z" fill="#fbfafa"/><path d="M4.400 1.600h8l.8 1.200v17.300l-8.800-2.300z" fill="#f6e6a4"/><path d="M4.400 1.600h1.600v16.600l-1.600-.4z" fill="#f9edbd"/><path d="M10.200 1.600h2.200l.8 1.200v17.300l-3-.8z" fill="#f7efcf"/><path d="M15.300 3.600h3v4.600h-3z" fill="#c83030"/><path d="M14.300 9.600h3v5.800h-3z" fill="#5a5a60"/><path d="M13.200 4h2v3h-2z" fill="#e88070"/></svg><div class="lb"><span style="letter-spacing:-0.49px">(_UNIRSE AL</span><span style="letter-spacing:-0.33px">CANAL</span></div></div>
<div class="it" style="left:894.5px;top:349.4px"><svg class="ic" viewBox="0 0 22 22"><path d="M4.600 -.4h12.400l4.200 4.200v16.200h-16.600z" fill="#dde7f6"/><path d="M17 -.4l4.200 4.200h-4.200z" fill="#b4c5e0"/><path d="M6 12h14v7h-14z" fill="#c0d0ea"/><path d="M12.800 2.600h7v8.600h-7z" fill="#ccdaef"/><path d="M12.800 4.400h7M12.800 6.400h7M12.800 8.400h7M16 2.600v8.600M7 14h12.500M7 16.400h12.500M11 12v7M15.300 12v7" stroke="#8aa3cf" stroke-width=".7" fill="none"/><rect x="1.500" y=".7" width="10.600" height="10.700" fill="#dff0d8"/><rect x="2.100" y="1.300" width="9" height="9.500" fill="#c6e4bb"/><rect x="10.900" y=".7" width="1.200" height="10.700" fill="#2e7d3a"/><path d="M3.600 2.600l5.400 6.800M9 2.600l-5.400 6.800" stroke="#2a8436" stroke-width="2" fill="none"/></svg><div class="lb"><span style="letter-spacing:-0.12px">videos negas a</span><span style="letter-spacing:-0.03px">borrar de irrev...</span></div></div>
<div class="it" style="left:959.0px;top:349.4px"><svg class="ic" viewBox="0 0 22 22"><path d="M7.500 1.800h9.500v1.500h-9.500z" fill="#e3c878"/><rect x="8" y="2.60" width="5.2" height="2.87" fill="#d83828"/><rect x="13" y="2.60" width="5.2" height="2.87" fill="#f0c830"/><rect x="8" y="5.37" width="5.2" height="2.87" fill="#f0c020"/><rect x="13" y="5.37" width="5.2" height="2.87" fill="#f4d040"/><rect x="8" y="8.13" width="5.2" height="2.87" fill="#f0b820"/><rect x="13" y="8.13" width="5.2" height="2.87" fill="#f0c830"/><rect x="8" y="10.90" width="5.2" height="2.87" fill="#e8a020"/><rect x="13" y="10.90" width="5.2" height="2.87" fill="#f0c030"/><rect x="8" y="13.67" width="5.2" height="2.87" fill="#d83020"/><rect x="13" y="13.67" width="5.2" height="2.87" fill="#e86030"/><rect x="8" y="16.43" width="5.2" height="2.87" fill="#c82818"/><rect x="13" y="16.43" width="5.2" height="2.87" fill="#e85030"/><path d="M4 1.800h4l.8 1v17.700l-4-2.700z" fill="#f3dd92"/><path d="M4 1.800h1.400v15.400l-1.400-.8z" fill="#f9edbd"/><rect x="16.600" y="3.500" width="1.700" height="15" fill="#f4e4e0"/></svg><div class="lb"><span style="letter-spacing:0.01px">ratta game</span></div></div>
<div class="it" style="left:1023.5px;top:349.4px"><svg class="ic" viewBox="0 0 22 22"><path d="M12.5 2.6h5.2v1.600h-5.200z" fill="#e3c878"/><path d="M13 3.600h5.300v15.200h-5.300z" fill="#f1efef"/><path d="M15.200 4.600h3.100v14.200h-3.100z" fill="#fbfafa"/><path d="M4.400 1.600h8l.8 1.200v17.300l-8.800-2.300z" fill="#f6e6a4"/><path d="M4.400 1.600h1.600v16.600l-1.600-.4z" fill="#f9edbd"/><path d="M10.200 1.600h2.200l.8 1.200v17.300l-3-.8z" fill="#f7efcf"/></svg><div class="lb"><span style="letter-spacing:-0.28px">negasTV</span></div></div>
<div class="it" style="left:1217.0px;top:349.4px"><svg class="ic" viewBox="0 0 22 22"><path d="M4.600 1h9.600l3.800 3.800v15.200h-13.400z" fill="#fafafa"/><path d="M14.200 1l3.800 3.800h-3.800z" fill="#c4c4c4"/><path d="M6.200 4.200h7M6.200 6.400h10.200M6.200 8.600h10.200M6.200 10.800h10.200M6.200 13h10.200M6.200 15.200h10.200M6.200 17.400h10.200" stroke="#8c8c8c" stroke-width=".9" fill="none"/></svg><div class="lb"><span style="letter-spacing:0.06px">copyrights</span><span style="letter-spacing:-0.12px">english descr...</span></div></div>
<div class="it" style="left:314.0px;top:419.2px"><svg class="ic" viewBox="0 0 22 22"><path d="M7.500 1.800h9.500v1.500h-9.500z" fill="#e3c878"/><rect x="8" y="2.60" width="5.2" height="3.42" fill="#b8cce8"/><rect x="13" y="2.60" width="5.2" height="3.42" fill="#a8c0e8"/><rect x="8" y="5.92" width="5.2" height="3.42" fill="#c8b0c8"/><rect x="13" y="5.92" width="5.2" height="3.42" fill="#98b4e0"/><rect x="8" y="9.24" width="5.2" height="3.42" fill="#e09090"/><rect x="13" y="9.24" width="5.2" height="3.42" fill="#a0b0d8"/><rect x="8" y="12.56" width="5.2" height="3.42" fill="#a8b4d8"/><rect x="13" y="12.56" width="5.2" height="3.42" fill="#b0c4e8"/><rect x="8" y="15.88" width="5.2" height="3.42" fill="#b0c8e8"/><rect x="13" y="15.88" width="5.2" height="3.42" fill="#b8d0ec"/><path d="M4 1.800h4l.8 1v17.700l-4-2.700z" fill="#f3dd92"/><path d="M4 1.800h1.400v15.400l-1.400-.8z" fill="#f9edbd"/></svg><div class="lb"><span style="letter-spacing:0.12px">poppa</span></div></div>
<div class="it" style="left:378.5px;top:419.2px"><svg class="ic" viewBox="0 0 22 22"><rect x=".5" y="7.800" width="20" height="11" fill="#e6e6e6"/><rect x="1.300" y="9" width="14.500" height="8.600" fill="#4a4a4a"/><rect x="2.500" y="11.800" width="10.500" height="2.600" fill="#141414"/><path d="M3 10.300h9M3 16.200h8" stroke="#b0b0b0" stroke-width=".9"/><path d="M5 13.100h5" stroke="#999" stroke-width=".7"/><rect x="16.300" y="8.600" width="3.600" height="9.400" fill="#f4f4f4"/></svg><div class="lb"><span style="letter-spacing:0.12px">th.jpg</span></div></div>
<div class="it" style="left:443.0px;top:419.2px"><svg class="ic" viewBox="0 0 22 22"><path d="M1.500 0h11.500l3.500 3.500v16h-15z" fill="#f0f0f0"/><path d="M13 0l3.500 3.500h-3.500z" fill="#9a9a9a"/><rect x="1.500" y="0" width="2.600" height="19.500" fill="#dcdcdc"/><path d="M2.200 1.200h1.300v1.500h-1.300zM2.200 4h1.300v1.500h-1.300zM2.200 6.800h1.300v1.500h-1.300zM2.200 9.600h1.300v1.500h-1.300zM2.200 12.400h1.300v1.500h-1.300zM2.200 15.200h1.300v1.500h-1.300zM2.200 17.600h1.300v1.300h-1.300z" fill="#444"/><circle cx="14.400" cy="12.300" r="7.200" fill="#b84650"/><path d="M14.400 12.300l-7-2M14.400 12.300l-4.500-5.600M14.400 12.300l1-7.200M14.400 12.300l6.300-3.500M14.400 12.300l6.800 2.800M14.400 12.300l3 6.600M14.400 12.300l-2.800 6.700M14.400 12.300l-6.800 3" stroke="#f0e2dc" stroke-width="1.600"/><path d="M14.400 12.300l6.800-.4M14.400 12.300l5.300 5" stroke="#8a90b0" stroke-width="1.400"/><path d="M14.400 12.300l4-6" stroke="#d8b890" stroke-width="1.400"/><circle cx="14.400" cy="12.300" r="2.100" fill="#3a3450"/></svg><div class="lb"><span style="letter-spacing:-0.01px">Movie1.fla</span></div></div>
<div class="it" style="left:507.5px;top:419.2px"><svg class="ic" viewBox="0 0 22 22"><path d="M3.200 1.600h10.400l4 3.600v14h-14.400z" fill="#fbfcfd"/><path d="M13.600 1.600l4 3.600h-4z" fill="#ccd4de"/><path d="M10.800 3.800c1.600.4 3 1.400 3.200 3.400c-.8-.9-1.600-1.300-2.400-1.400v5.600c0 1.300-1.100 2.200-2.500 2.200c-1.300 0-2.100-.7-2.100-1.600c0-1.100 1-1.900 2.300-1.900c.5 0 1 .1 1.500 .4z" fill="#2f9ad6"/><rect x="4.600" y="14.300" width="11.600" height="3.800" fill="#e9ebee"/><text x="10.400" y="17.700" font-family="Liberation Sans,sans-serif" font-size="4.200" font-weight="bold" fill="#5a5f66" text-anchor="middle">MP3</text></svg><div class="lb"><span style="letter-spacing:-0.12px">ernesto seyos</span><span style="letter-spacing:-0.06px">2.mp3</span></div></div>
<div class="it" style="left:572.0px;top:419.2px"><svg class="ic" viewBox="0 0 22 22"><path d="M12.5 2.6h5.2v1.600h-5.200z" fill="#e3c878"/><path d="M13 3.600h5.300v15.200h-5.300z" fill="#f4ecc8"/><path d="M15.200 4.600h3.100v14.200h-3.100z" fill="#fbfafa"/><path d="M4.400 1.600h8l.8 1.200v17.300l-8.800-2.300z" fill="#f6e6a4"/><path d="M4.400 1.600h1.600v16.600l-1.600-.4z" fill="#f9edbd"/><path d="M10.200 1.600h2.200l.8 1.200v17.300l-3-.8z" fill="#f7efcf"/><path d="M10 6.500h3v2.500h-3zM10.500 9.500h2.500v5h-2.500z" fill="#c9a648"/><path d="M14 5h3v11h-3z" fill="#f1e7c0"/></svg><div class="lb"><span style="letter-spacing:-0.12px">leshe shabo</span><span style="letter-spacing:-0.16px">zaragoza</span></div></div>
<div class="it" style="left:636.5px;top:419.2px"><svg class="ic" viewBox="0 0 22 22"><path d="M12.5 2.6h5.2v1.600h-5.200z" fill="#e3c878"/><path d="M13 3.600h5.300v15.200h-5.300z" fill="#f1efef"/><path d="M15.200 4.600h3.100v14.200h-3.100z" fill="#fbfafa"/><path d="M4.400 1.600h8l.8 1.200v17.300l-8.800-2.300z" fill="#f6e6a4"/><path d="M4.400 1.600h1.600v16.600l-1.600-.4z" fill="#f9edbd"/><path d="M10.200 1.600h2.200l.8 1.200v17.300l-3-.8z" fill="#f7efcf"/><path d="M14.500 7h2.500v5h-2.500z" fill="#b9cdea"/><path d="M14 13h3.500v2h-3.500z" fill="#d6e0f0"/></svg><div class="lb"><span style="letter-spacing:-0.17px">2020_pinchim...</span></div></div>
<div class="it" style="left:765.5px;top:419.2px"><svg class="ic" viewBox="0 0 22 22"><path d="M12.5 2.6h5.2v1.600h-5.200z" fill="#e3c878"/><path d="M13 3.600h5.300v15.200h-5.300z" fill="#f1efef"/><path d="M15.200 4.600h3.100v14.200h-3.100z" fill="#fbfafa"/><path d="M4.400 1.600h8l.8 1.200v17.300l-8.800-2.300z" fill="#f6e6a4"/><path d="M4.400 1.600h1.600v16.600l-1.600-.4z" fill="#f9edbd"/><path d="M10.200 1.600h2.200l.8 1.200v17.300l-3-.8z" fill="#f7efcf"/></svg><div class="lb"><span style="letter-spacing:-0.14px">PINCHIMONO</span></div></div>
<div class="it" style="left:1217.0px;top:419.2px"><svg class="ic" viewBox="0 0 22 22"><path d="M12.5 2.6h5.2v1.600h-5.200z" fill="#e3c878"/><path d="M13 3.600h5.300v15.200h-5.300z" fill="#f1efef"/><path d="M15.200 4.600h3.100v14.200h-3.100z" fill="#fbfafa"/><path d="M4.400 1.600h8l.8 1.200v17.300l-8.800-2.300z" fill="#f6e6a4"/><path d="M4.400 1.600h1.600v16.600l-1.600-.4z" fill="#f9edbd"/><path d="M10.200 1.600h2.200l.8 1.200v17.300l-3-.8z" fill="#f7efcf"/></svg><div class="lb"><span style="letter-spacing:-0.14px">appeals</span></div></div>
<div class="it" style="left:443.0px;top:489.0px"><svg class="ic" viewBox="0 0 22 22"><rect x="1" y="7.300" width="20.300" height="11.700" fill="#24143e"/><rect x="2.600" y="8.300" width="17" height="9.700" fill="#4c1f9c"/><circle cx="11.500" cy="13.500" r="1" fill="#d8b0d8"/><rect x="15" y="9" width="3" height="1" fill="#8a68c8"/><path d="M1.300 8.200h1v1.300h-1zM1.300 10.800h1v1.300h-1zM1.300 13.400h1v1.300h-1zM1.300 16h1v1.300h-1zM20 8.200h1v1.300h-1zM20 10.800h1v1.300h-1zM20 13.400h1v1.300h-1zM20 16h1v1.300h-1z" fill="#9a90b8"/></svg><div class="lb"><span style="letter-spacing:-0.00px">Mermalandos</span><span style="letter-spacing:-0.07px">Cop 2.mp4</span></div></div>
<div class="it" style="left:572.0px;top:489.0px"><svg class="ic" viewBox="0 0 22 22"><path d="M7.500 1.800h9.500v1.500h-9.500z" fill="#e3c878"/><rect x="8" y="2.60" width="5.2" height="3.42" fill="#4a4238"/><rect x="13" y="2.60" width="5.2" height="3.42" fill="#4a4238"/><rect x="8" y="5.92" width="5.2" height="3.42" fill="#2a2420"/><rect x="13" y="5.92" width="5.2" height="3.42" fill="#2a2420"/><rect x="8" y="9.24" width="5.2" height="3.42" fill="#8a7a5a"/><rect x="13" y="9.24" width="5.2" height="3.42" fill="#8a7a5a"/><rect x="8" y="12.56" width="5.2" height="3.42" fill="#1a1a1a"/><rect x="13" y="12.56" width="5.2" height="3.42" fill="#1a1a1a"/><rect x="8" y="15.88" width="5.2" height="3.42" fill="#3a3228"/><rect x="13" y="15.88" width="5.2" height="3.42" fill="#3a3228"/><path d="M4 1.800h4l.8 1v17.700l-4-2.700z" fill="#f3dd92"/><path d="M4 1.800h1.400v15.400l-1.400-.8z" fill="#f9edbd"/></svg><div class="lb"><span style="letter-spacing:0.06px">editados por</span><span style="letter-spacing:-0.53px">NOSEKIEN</span></div></div>
<div class="it" style="left:636.5px;top:489.0px"><svg class="ic" viewBox="0 0 22 22"><path d="M1.6 2.6l2-1.200h17.500l-1 1.200z" fill="#e8e2d6"/><rect x="1.6" y="2.4" width="19.500" height="4.600" fill="#c04aa8"/><rect x="1.6" y="5.5" width="19.500" height="1.500" fill="#7d2a74"/><rect x="1.6" y="2.4" width="3.600" height="4.600" fill="#eae4d8"/><path d="M1.6 3.9h3.600M1.6 5.4h3.600" stroke="#9a948a" stroke-width=".5"/><path d="M1.1 7.7l2-1.200h17.500l-1 1.200z" fill="#e8e2d6"/><rect x="1.1" y="7.5" width="19.500" height="4.600" fill="#3f66cc"/><rect x="1.1" y="10.6" width="19.500" height="1.500" fill="#263f8e"/><rect x="1.1" y="7.5" width="3.600" height="4.600" fill="#eae4d8"/><path d="M1.1 9.0h3.600M1.1 10.5h3.600" stroke="#9a948a" stroke-width=".5"/><path d="M0.6 12.8l2-1.200h17.500l-1 1.200z" fill="#e8e2d6"/><rect x="0.6" y="12.6" width="19.500" height="4.600" fill="#43a23e"/><rect x="0.6" y="15.7" width="19.500" height="1.500" fill="#27692a"/><rect x="0.6" y="12.6" width="3.600" height="4.600" fill="#eae4d8"/><path d="M0.6 14.1h3.600M0.6 15.6h3.600" stroke="#9a948a" stroke-width=".5"/><rect x="10" y="1.600" width="3" height="16" fill="#c9a24a"/><rect x="10.300" y="7.500" width="2.400" height="3.200" fill="#5a4418"/><rect x="10.900" y="8.200" width="1.200" height="1.600" fill="#e8d8a0"/></svg><div class="lb"><span style="letter-spacing:-0.07px">animaciones de</span><span style="letter-spacing:-0.10px">ral.rar</span></div></div>
<div class="it" style="left:1152.5px;top:489.0px"><svg class="ic" viewBox="0 0 22 22"><rect x="-2" y="2" width="23" height="14.500" fill="#eef3f8"/><rect x="-1" y="3" width="21" height="12.500" fill="#62a8e4"/><path d="M-1 11l6-2.500l5 2.500l10-2v6.500h-21z" fill="#a8d0a8"/><rect x="-1" y="13" width="21" height="2.500" fill="#dfe8e8"/></svg><div class="lb"><span style="letter-spacing:0.03px">imagen.jpg</span></div></div>
<div class="it" style="left:1217.0px;top:489.0px"><svg class="ic" viewBox="0 0 22 22"><path d="M12.5 2.6h5.2v1.600h-5.200z" fill="#e3c878"/><path d="M13 3.600h5.300v15.200h-5.300z" fill="#f1efef"/><path d="M15.200 4.600h3.100v14.200h-3.100z" fill="#fbfafa"/><path d="M4.400 1.600h8l.8 1.200v17.300l-8.800-2.300z" fill="#f6e6a4"/><path d="M4.400 1.600h1.600v16.600l-1.600-.4z" fill="#f9edbd"/><path d="M10.200 1.600h2.200l.8 1.200v17.300l-3-.8z" fill="#f7efcf"/><path d="M15.600 6.500l2.200-.6v6.200a1.300 1.200 0 1 1-.8-1.100v-3.600l-.8.200v4.600a1.300 1.200 0 1 1-.8-1.100z" fill="#4a9ad8"/></svg><div class="lb"><span style="letter-spacing:-0.24px">MUSICA NUEVA</span></div></div>
<div class="it" style="left:765.5px;top:558.7px"><svg class="ic" viewBox="0 0 22 22"><path d="M1.6 2.6l2-1.200h17.500l-1 1.200z" fill="#e8e2d6"/><rect x="1.6" y="2.4" width="19.500" height="4.600" fill="#c04aa8"/><rect x="1.6" y="5.5" width="19.500" height="1.500" fill="#7d2a74"/><rect x="1.6" y="2.4" width="3.600" height="4.600" fill="#eae4d8"/><path d="M1.6 3.9h3.600M1.6 5.4h3.600" stroke="#9a948a" stroke-width=".5"/><path d="M1.1 7.7l2-1.200h17.500l-1 1.200z" fill="#e8e2d6"/><rect x="1.1" y="7.5" width="19.500" height="4.600" fill="#3f66cc"/><rect x="1.1" y="10.6" width="19.500" height="1.500" fill="#263f8e"/><rect x="1.1" y="7.5" width="3.600" height="4.600" fill="#eae4d8"/><path d="M1.1 9.0h3.600M1.1 10.5h3.600" stroke="#9a948a" stroke-width=".5"/><path d="M0.6 12.8l2-1.200h17.500l-1 1.200z" fill="#e8e2d6"/><rect x="0.6" y="12.6" width="19.500" height="4.600" fill="#43a23e"/><rect x="0.6" y="15.7" width="19.500" height="1.500" fill="#27692a"/><rect x="0.6" y="12.6" width="3.600" height="4.600" fill="#eae4d8"/><path d="M0.6 14.1h3.600M0.6 15.6h3.600" stroke="#9a948a" stroke-width=".5"/><rect x="10" y="1.600" width="3" height="16" fill="#c9a24a"/><rect x="10.300" y="7.500" width="2.400" height="3.200" fill="#5a4418"/><rect x="10.900" y="8.200" width="1.200" height="1.600" fill="#e8d8a0"/></svg><div class="lb"><span style="letter-spacing:-0.11px">The Simpsons Hit</span><span style="letter-spacing:-0.02px">&amp; Run by Mon...</span></div></div>
<div class="it" style="left:830.0px;top:558.7px"><svg class="ic" viewBox="0 0 22 22"><text x="0.500" y="14.200" font-family="Liberation Sans,sans-serif" font-weight="bold" font-size="16.500" fill="#c4c8ee" stroke="#7078b8" stroke-width="1.100" paint-order="stroke" textLength="20" lengthAdjust="spacingAndGlyphs">CR</text><path d="M12 11h8.500v5c0 2-2 3.500-4.200 4.500c-2.200-1-4.300-2.500-4.300-4.500z" fill="#e8b828"/><path d="M12 11h4.200v4.700h-4.200z" fill="#2a68c8"/><path d="M16.200 15.700h4.300c0 2-2 3.500-4.300 4.500z" fill="#2a68c8"/></svg><div class="lb"><span style="letter-spacing:-0.28px">CR_Downloade...</span></div></div>
<div class="it" style="left:1217.0px;top:558.7px"><svg class="ic" viewBox="0 0 22 22"><path d="M12.5 2.6h5.2v1.600h-5.200z" fill="#e3c878"/><path d="M13 3.600h5.300v15.200h-5.300z" fill="#f1efef"/><path d="M15.200 4.600h3.100v14.200h-3.100z" fill="#fbfafa"/><path d="M4.400 1.600h8l.8 1.200v17.300l-8.800-2.300z" fill="#f6e6a4"/><path d="M4.400 1.600h1.600v16.600l-1.600-.4z" fill="#f9edbd"/><path d="M10.200 1.600h2.200l.8 1.200v17.300l-3-.8z" fill="#f7efcf"/><path d="M15.600 6.500l2.200-.6v6.200a1.300 1.200 0 1 1-.8-1.100v-3.600l-.8.200v4.600a1.300 1.200 0 1 1-.8-1.100z" fill="#4a9ad8"/></svg><div class="lb"><span style="letter-spacing:-0.29px">SoundFX</span></div></div>
<div class="it" style="left:765.5px;top:628.5px"><svg class="ic" viewBox="0 0 22 22"><path d="M12.5 2.6h5.2v1.600h-5.200z" fill="#e3c878"/><path d="M13 3.600h5.300v15.200h-5.300z" fill="#f1efef"/><path d="M15.200 4.600h3.100v14.200h-3.100z" fill="#fbfafa"/><path d="M4.400 1.600h8l.8 1.200v17.300l-8.800-2.300z" fill="#f6e6a4"/><path d="M4.400 1.600h1.600v16.600l-1.600-.4z" fill="#f9edbd"/><path d="M10.200 1.600h2.200l.8 1.200v17.300l-3-.8z" fill="#f7efcf"/></svg><div class="lb"><span style="letter-spacing:-0.11px">The Simpsons Hit</span><span style="letter-spacing:-0.02px">&amp; Run by Mon...</span></div></div>
<div class="it" style="left:959.0px;top:628.5px"><svg class="ic" viewBox="0 0 22 22"><circle cx="12" cy="10" r="10" fill="#2f8a86"/><circle cx="12.500" cy="10" r="6.500" fill="#7fc8c0"/><circle cx="8" cy="3.500" r="2.600" fill="#a8e0d8"/><rect x="0" y="12.5" width="8.5" height="8.5" fill="#f4f6f8"/><path d="M3.4 14.1l3.2 0l0 3.2l-1-1l-2.4 2.6l-1.2-1.2l2.5-2.5z" fill="#2a6cc4"/></svg><div class="lb"><span style="letter-spacing:0.09px">MikuMikuMov...</span><span style="letter-spacing:0.01px">- Acceso directo</span></div></div>
<div class="it" style="left:1023.5px;top:628.5px"><svg class="ic" viewBox="0 0 22 22"><circle cx="11" cy="9.500" r="9.500" fill="#3a9ad8"/><path d="M4 5c4-4 11-4 14 1c-4-2-9-2-14-1z" fill="#d8f0f8"/><path d="M9 10h10v8h-10z" fill="#e8f0e0"/><path d="M14 11h4v6h-4z" fill="#58a838"/><rect x="0" y="12.5" width="8.5" height="8.5" fill="#f4f6f8"/><path d="M3.4 14.1l3.2 0l0 3.2l-1-1l-2.4 2.6l-1.2-1.2l2.5-2.5z" fill="#2a6cc4"/></svg><div class="lb"><span style="letter-spacing:-0.01px">Any Video</span><span style="letter-spacing:-0.05px">Converter</span></div></div>
<div class="it" style="left:1217.0px;top:628.5px"><svg class="ic" viewBox="0 0 22 22"><path d="M2.600 1.800l8.400-1.600l8.600 1.600l-2.200 17.400h-12.600z" fill="#e4e9ef"/><path d="M2.600 1.800l8.400-1.600l8.600 1.600l-8.600 1.800z" fill="#f8fafc"/><path d="M2.600 1.800l8.400 1.800l-.6 15.600h-5.600z" fill="#eef2f6"/><path d="M11 3.600l8.600-1.800l-2.200 17.400h-7z" fill="#d5dce5"/><path d="M5.800 9.200l2-2.800l2.200 2.600zM10.200 9.800l1.200 3l-3 .4zM4.800 10.600l2.400 1.600l-2.200 2z" fill="#1e78d4"/><circle cx="7.600" cy="10.600" r="1.100" fill="#eef2f6"/></svg><div class="lb"><span style="letter-spacing:-0.15px">Papelera de</span><span style="letter-spacing:-0.10px">reciclaje</span></div></div>

</div>

<div id="tb">
  <svg style="position:absolute;left:10.200px;top:8px" width="11.500" height="10.500" viewBox="0 0 12 12" preserveAspectRatio="none"><path d="M0 1.700l4.900-.7v4.700h-4.900zM5.500.9l6.500-.9v5.700h-6.500zM0 6.300h4.900v4.700l-4.900-.7zM5.500 6.300h6.500v5.700l-6.500-.9z" fill="#fff"/></svg>
  <div class="ul" style="left:37px;width:102px"></div>
  <svg style="position:absolute;left:41px;top:6px" width="15" height="15" viewBox="0 0 16 16"><circle cx="8" cy="8" r="7.500" fill="#e8453c"/><path d="M8 8L1.500 4.200A7.500 7.500 0 0 0 6.800 15.400z" fill="#34a853"/><path d="M8 8l-1.200 7.400A7.500 7.500 0 0 0 15.300 5.800z" fill="#fbbc05"/><circle cx="8" cy="8" r="3.500" fill="#fff"/><circle cx="8" cy="8" r="2.700" fill="#4285f4"/></svg>
  <div class="t" style="left:60px;letter-spacing:0">WhatsApp - Googl...</div>
  <svg style="position:absolute;left:150px;top:5px" width="17" height="17" viewBox="0 0 17 17"><circle cx="8.500" cy="8.500" r="8" fill="#c0453a"/><path d="M8.500 8.500l-8-2M8.500 8.500l-5-6.500M8.500 8.500l1-8M8.500 8.500l7-4.500M8.500 8.500l8 3M8.500 8.500l3.500 7.500M8.500 8.500l-3 8M8.500 8.500l-8 4" stroke="#f1e6de" stroke-width="1.800"/><circle cx="8.500" cy="8.500" r="2.300" fill="#222"/></svg>
  <svg style="position:absolute;left:183px;top:5px" width="17" height="17" viewBox="0 0 17 17"><path d="M1 6l2-3l2 4l2-5l2 4" stroke="#c8d038" stroke-width="1.300" fill="none"/><circle cx="11.500" cy="5" r="3" fill="#a070d0"/><path d="M9.500 7l-7 7l1.500 1l7-6.500z" fill="#e8e8f0"/><rect x="6" y="11.500" width="10" height="4.500" fill="#e4e4e8"/><path d="M7.500 13h2v1.500h-2zM11 13h2v1.500h-2z" fill="#333"/></svg>
  <svg style="position:absolute;left:215px;top:5px" width="18" height="17" viewBox="0 0 18 17"><ellipse cx="8.500" cy="6.500" rx="7.500" ry="4.800" transform="rotate(-20 8.500 6.500)" fill="#f0d8e0"/><ellipse cx="8" cy="6" rx="5.500" ry="3" transform="rotate(-20 8 6)" fill="#e09aa8"/><path d="M11 8l4 1.500l-2 2l3 3l-2 1.500l-2.500-3l-2 1.500z" fill="#2a78c8"/></svg>
  <div class="ul" style="left:244px;width:102px"></div>
  <svg style="position:absolute;left:247px;top:5px" width="17" height="17" viewBox="0 0 17 17"><rect width="17" height="17" fill="#0a0a0a"/><circle cx="8.500" cy="8.500" r="7.500" fill="#e8eef2"/><circle cx="7" cy="9" r="5" fill="#2a6a9a"/><circle cx="6.500" cy="9.500" r="2.600" fill="#0a2a4a"/><circle cx="8.500" cy="7" r="1.200" fill="#d8e8f4"/></svg>
  <div class="t" style="left:266px">FaceRig</div>
  <div style="position:absolute;left:349px;top:0;width:108px;height:27px;background:#323232"></div>
  <div class="ul" style="left:349px;width:108px;background:#b0b0b0"></div>
  <svg style="position:absolute;left:356px;top:5px" width="16" height="16" viewBox="0 0 16 16"><rect width="16" height="16" rx="2.500" fill="#31c3a2"/><path d="M3.500 5.500h9a1.500 1.500 0 0 1 1.500 1.500v2a1.500 1.500 0 0 1-1.500 1.500h-5.500l-2 1.700v-1.700h-1.500a1.500 1.500 0 0 1-1.500-1.500v-2a1.500 1.500 0 0 1 1.500-1.500z" fill="#eafaf5"/><path d="M4.500 7.300h2.500v1.500h-2.500zM9 7.300h2.500v1.500h-2.500z" fill="#17242d"/></svg>
  <div class="t" style="left:374px">Streamlabs OBS</div>
  <div class="t" style="left:1239px;top:14px;font-size:7.500px">120</div>
</div>

<div id="bars">
  <div class="bar b1"><div class="nm">MARIA CLR</div><div class="am">MX$50</div></div>
  <div class="bar bx" style="top:37.700px"><div class="nm">SANTIAGO HERNANDEZ</div><div class="am">MX$20</div></div>
  <div class="bar bx" style="top:64.100px"><div class="nm" style="letter-spacing:-.8px">DRAIKER MRS</div><div class="am">MX$20</div></div>
  <div class="bar bx" style="top:90.400px"><div class="nm" style="letter-spacing:-.3px">ABELARDO MANZO VENTURA</div><div class="am">MX$20</div></div>
  <div class="bar bx" style="top:116.800px"><div class="nm" style="letter-spacing:-.3px">ABELARDO MANZO VENTURA</div><div class="am">MX$20</div></div>
</div>

<svg id="char" viewBox="980 460 300 260">
<defs>
<radialGradient id="fg" cx="0.55" cy="0.6" r="0.66">
<stop offset="0" stop-color="#8780b8"/><stop offset=".45" stop-color="#8e87be"/><stop offset=".8" stop-color="#a29bcd"/><stop offset="1" stop-color="#b6b0de"/>
</radialGradient>
</defs>
<!-- chair lower back / base -->
<path d="M1090 640L1092 636L1092 720L1020 720z" fill="#1b1b1b"/>
<path d="M1216 636L1222 640L1268 720L1216 720z" fill="#171717"/>
<!-- struts -->
<path d="M1086 638L1097 644L1022 720L1004 720z" fill="#060606"/>
<path d="M1096 645L1098 647L1026 720L1023 720z" fill="#2c2c2c"/>
<path d="M1209 643L1219 636L1280 704L1280 720L1272 720z" fill="#111"/>
<path d="M1219 636L1280 704L1280 707L1217 637.500z" fill="#262626"/>
<!-- armrest left -->
<path d="M1000 699Q1000 694 1008 693.500L1034 693.500Q1042 694.500 1040 700L1036 709L1004 709Q1000 706 1000 699z" fill="#262626"/><path d="M1002 697Q1004 695 1010 695L1034 695" stroke="#3a3a3a" stroke-width="1.200" fill="none"/><path d="M1010 709L1030 709L1028 720L1014 720z" fill="#101010"/>
<!-- chair back with wings -->
<path d="M1119 484Q1122 479 1130 479L1178 479Q1186 479 1188 486L1199.500 522L1220 549L1243 563Q1250 570 1249 582L1246 601L1230 623L1220 647L1084 642L1068 622L1054 590Q1049 572 1056 565L1083 549L1105.500 513z" fill="#171717" stroke="#1f1f1f" stroke-width="1.500"/>
<path d="M1119 484Q1122 479 1130 479L1178 479Q1186 479 1188 486L1192 500L1115 500z" fill="#191919"/>
<!-- red panels -->
<path d="M1086 560Q1070 566 1068 580Q1069 600 1084 617L1090 600L1088 575z" fill="#d81418"/>
<path d="M1219 562Q1232 568 1234 582Q1233 598 1222 612L1216 596L1217 575z" fill="#d81418"/>
<!-- body -->
<path d="M1090 625L1216 625L1223 650L1224 720L1084 720L1085 650z" fill="#020202"/>
<path d="M1084 640L1091 640L1091 720L1083 720z" fill="#1c1c1c"/>
<!-- head -->
<path d="M1082.0 580.0C1082.0 537.4 1110.0 509.0 1152.0 509.0C1194.0 509.0 1222.0 537.4 1222.0 580.0C1222.0 622.6 1194.0 651.0 1152.0 651.0C1110.0 651.0 1082.0 622.6 1082.0 580.0z" fill="#050505"/>
<path d="M1085.0 580.0C1085.0 539.1 1111.8 511.8 1152.0 511.8C1192.2 511.8 1219.0 539.1 1219.0 580.0C1219.0 620.9 1192.2 648.2 1152.0 648.2C1111.8 648.2 1085.0 620.9 1085.0 580.0z" fill="url(#fg)"/>
<path d="M1088.500 552.500Q1152 545.500 1216.500 552L1219 561.500Q1152 554 1086 562z" fill="#060608"/>
<ellipse cx="1108.500" cy="582.500" rx="9.600" ry="17" fill="#030305"/>
<ellipse cx="1194" cy="582.500" rx="9.600" ry="17" fill="#030305"/>
<path d="M1134 614Q1134 611.500 1140 612L1164 612Q1170 612 1169.500 614.500Q1168 618 1152 618Q1136 618 1134 614z" fill="#120e2c"/>

</svg>

<div id="total">Maria CLR: $534.05</div>
</body>
</html>
